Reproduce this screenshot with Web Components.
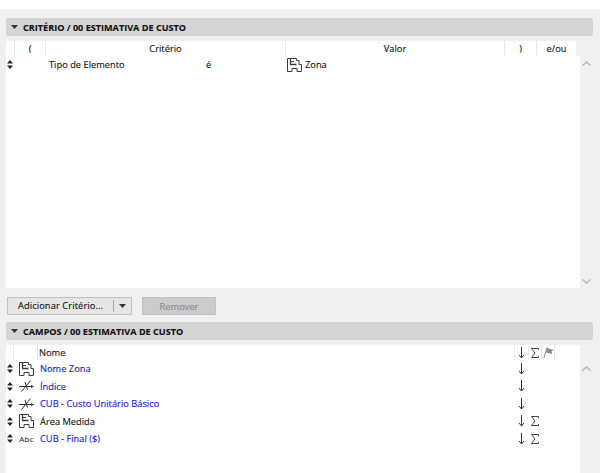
<!DOCTYPE html>
<html>
<head>
<meta charset="utf-8">
<style>
html, body { margin: 0; height: 100%; }
body { width: 600px; height: 473px; overflow: hidden; background: #fff; font: 9.3px "Open Sans", "Liberation Sans", sans-serif; color: #111; -webkit-text-stroke: .12px currentColor; }
</style>
</head>
<body>
<schedule-app></schedule-app>

<script>
const ZONE = `<svg width="15" height="14" viewBox="0 0 15 14" fill="#fff" stroke="#3c3c3c" stroke-width="1"><path d="M.5 .5h9v2h2.500v4h2.500v7h-4.500v-3h-5v3h-4.500z"/><path d="M3.500 .5v6h6" fill="none" stroke-width="1.300"/><path d="M3.500 3.500h3.500" fill="none"/></svg>`;
const ANGLE = `<svg width="15" height="12" viewBox="0 0 15 12" fill="none" stroke="#2a2a2a" stroke-width="1"><path d="M0 6.500h13M2.500 11.500l9-11M6 2l2.500 7.500"/><path d="M12 5v3l3-1.500z" fill="#2a2a2a" stroke="none"/></svg>`;
const UPDOWN = `<svg width="6" height="9" viewBox="0 0 6 9" fill="#222"><path d="M3 0l3 3.500h-6zM3 9l3-3.500h-6z"/></svg>`;
const ARROW = `<svg width="7" height="12" viewBox="0 0 7 12" fill="none" stroke="#333" stroke-width="1"><path d="M3.500 0v11M1 8l2.500 3 2.500-3"/></svg>`;
const SIGMA = `<svg width="8" height="10" viewBox="0 0 8 10" fill="none" stroke="#444" stroke-width="1"><path d="M7.500 2v-1.500h-7l3.500 4.500-3.500 4.500h7v-1.500"/></svg>`;
const FLAG = `<svg width="11" height="11" viewBox="0 0 11 11"><path d="M1 10.500l3-10" stroke="#888" fill="none"/><path d="M4 1l6.500 2-2 1.500 1 2.500-6.500-1.500z" fill="#888"/></svg>`;
const CARET = `<svg width="7" height="4" viewBox="0 0 7 4" fill="#333"><path d="M0 0h7l-3.500 4z"/></svg>`;
const CHEVRON = d => `<svg width="9" height="5" viewBox="0 0 9 5" fill="none" stroke="#b4b4b4" stroke-width="1.500"><path d="${d}"/></svg>`;

// barra de titulo do painel
class PanelBar extends HTMLElement {
  constructor() {
    super();
    this.attachShadow({ mode: "open" });
    this.shadowRoot.innerHTML = `<style>
      :host { display: flex; align-items: center; gap: 5px; height: 18px; margin: 0 7px 0 6px; padding-left: 5px;
        background: #d4d4d4; border-radius: 2px; font-weight: 700; font-size: 9.100px; color: #111; }
      </style>${CARET}<slot></slot>`;
  }
}
customElements.define("panel-bar", PanelBar);

// uma celula de cabecalho
class HeadCell extends HTMLElement {
  constructor() {
    super();
    this.attachShadow({ mode: "open" });
    this.shadowRoot.innerHTML = `<style>
      :host { display: flex; align-items: center; justify-content: center; box-sizing: border-box; height: 100%;
        border-left: 1px solid #e6e6e6; }
      :host([left]) { justify-content: flex-start; padding-left: 1px; }
      :host([plain]) { border-left: 0; }
      </style><slot></slot>`;
  }
}
customElements.define("head-cell", HeadCell);

class CritTable extends HTMLElement {
  constructor() {
    super();
    this.attachShadow({ mode: "open" });
    this.shadowRoot.innerHTML = `<style>
      :host { display: block; height: 247px; margin: 5px 7px 0 6px; }
      .wrap { display: grid; grid-template-columns: 1fr 13px; height: 100%; }
      .head { display: grid; grid-template-columns: 8px 31px 240px 219px 32px 40px; height: 15px; background: #fff; width: 570px; }
      .list { background: #fff; width: 574px; height: 232px; }
      .side { display: flex; flex-direction: column; justify-content: space-between; align-items: center; padding: 20px 0 4px; height: 247px; box-sizing: border-box; }
      .row { display: grid; grid-template-columns: 43px 157px 81px 1fr; align-items: center; height: 17px; }
      .h { display: flex; padding-left: 1px; align-items: center; }
      .z { display: flex; align-items: center; gap: 3px; }
      </style>
      <div class="wrap"><div>
        <div class="head">
          <head-cell plain></head-cell><head-cell>(</head-cell><head-cell>Critério</head-cell><head-cell>Valor</head-cell><head-cell>)</head-cell><head-cell>e/ou</head-cell>
        </div>
        <div class="list">
          <div class="row"><span class="h">${UPDOWN}</span><span>Tipo de Elemento</span><span>é</span><span class="z">${ZONE}Zona</span></div>
        </div></div>
        <div class="side">${CHEVRON("M.5 4.500l4-3.500 4 3.500")}${CHEVRON("M.5 .5l4 3.500 4-3.500")}</div>
      </div>`;
  }
}
customElements.define("crit-table", CritTable);

class ToolRow extends HTMLElement {
  constructor() {
    super();
    this.attachShadow({ mode: "open" });
    this.shadowRoot.innerHTML = `<style>
      :host { display: flex; gap: 10px; height: 18px; margin: 9px 0 7px 7px; }
      .btn { display: flex; align-items: center; box-sizing: border-box; height: 18px; border: 1px solid #c2c2c2; background: #e6e6e6; }
      .add { width: 125px; }
      .add span { flex: 1; text-align: center; border-right: 1px solid #a8a8a8; height: 12px; line-height: 12px; letter-spacing: .1px; }
      .add i { display: flex; width: 17px; justify-content: center; }
      .rem { width: 74px; justify-content: center; background: #cbcbcb; color: #8c8c8c; }
      </style>
      <div class="btn add"><span>Adicionar Critério...</span><i>${CARET}</i></div>
      <div class="btn rem">Remover</div>`;
  }
}
customElements.define("tool-row", ToolRow);

class FieldRow extends HTMLElement {
  constructor() {
    super();
    this.attachShadow({ mode: "open" });
  }
  connectedCallback() {
    const icons = { zone: ZONE, angle: ANGLE, abc: `<span class="abc">Abc</span>` };
    const blue = this.hasAttribute("blue");
    this.shadowRoot.innerHTML = `<style>
      :host { display: grid; grid-template-columns: 6px 27px 474px 15px 12px; align-items: center; height: 17.500px; }
      .i { display: flex; justify-content: center; }
      .ic { display: flex; justify-content: center; }
      .abc { font-size: 8px; color: #333; letter-spacing: .2px; }
      .t { color: ${blue ? "#1414dc" : "#111"}; }
      </style>
      <span class="i">${UPDOWN}</span>
      <span class="ic">${icons[this.getAttribute("icon")]}</span>
      <span class="t"><slot></slot></span>
      <span class="i">${ARROW}</span>
      <span class="i">${this.hasAttribute("sum") ? SIGMA : ""}</span>`;
  }
}
customElements.define("field-row", FieldRow);

class FieldTable extends HTMLElement {
  constructor() {
    super();
    this.attachShadow({ mode: "open" });
    this.shadowRoot.innerHTML = `<style>
      :host { display: grid; grid-template-columns: 574px 13px; margin: 5px 7px 0 6px; height: 128px; }
      .main { background: #fff; padding-left: 1px; }
      .head { display: grid; grid-template-columns: 6px 24px 477px 14px 13px 13px 25px; height: 15px; }
      .side { display: flex; justify-content: center; padding-top: 21px; }
      </style>
      <div class="main">
        <div class="head">
          <head-cell plain></head-cell><head-cell></head-cell><head-cell left>Nome</head-cell><head-cell>${ARROW}</head-cell><head-cell>${SIGMA}</head-cell><head-cell>${FLAG}</head-cell><head-cell></head-cell>
        </div>
        <slot></slot>
      </div>
      <div class="side">${CHEVRON("M.5 4.500l4-3.500 4 3.500")}</div>`;
  }
}
customElements.define("field-table", FieldTable);

class ScheduleApp extends HTMLElement {
  constructor() {
    super();
    this.attachShadow({ mode: "open" });
    this.shadowRoot.innerHTML = `<style>
      :host { display: block; margin-top: 9px; padding-top: 9px; height: 464px; box-sizing: border-box; background: #f0f0f0; }
      </style>
      <panel-bar>CRITÉRIO / 00 ESTIMATIVA DE CUSTO</panel-bar>
      <crit-table></crit-table>
      <tool-row></tool-row>
      <panel-bar>CAMPOS / 00 ESTIMATIVA DE CUSTO</panel-bar>
      <field-table>
        <field-row icon="zone" blue>Nome Zona</field-row>
        <field-row icon="angle" blue>Índice</field-row>
        <field-row icon="angle" blue>CUB - Custo Unitário Básico</field-row>
        <field-row icon="zone" sum>Área Medida</field-row>
        <field-row icon="abc" blue sum>CUB - Final ($)</field-row>
      </field-table>`;
  }
}
customElements.define("schedule-app", ScheduleApp);
</script>
</body>
</html>
